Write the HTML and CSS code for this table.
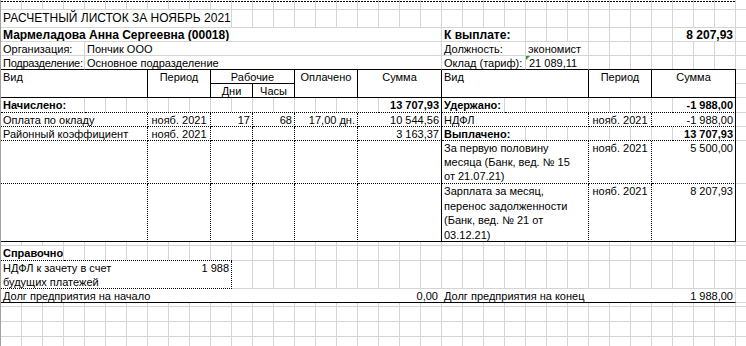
FILE: index.html
```html
<!DOCTYPE html>
<html lang="ru">
<head>
<meta charset="utf-8">
<title>Расчетный листок</title>
<link rel="stylesheet" href="styles.css">
</head>
<body>
<div class="sheet">
  <div class="row h10">
    <div class="pb s35"></div>
  </div>
  <div class="row h18">
    <div class="c s11 title">РАСЧЕТНЫЙ ЛИСТОК ЗА НОЯБРЬ 2021</div>
  </div>
  <div class="row h14">
    <div class="c s21 name">Мармеладова Анна Сергеевна (00018)</div>
    <div class="c s4 big">К выплате:</div>
    <div class="gap s7"></div>
    <div class="c s3 big r">8 207,93</div>
  </div>
  <div class="row h14">
    <div class="c s4">Организация:</div>
    <div class="c s17">Пончик ООО</div>
    <div class="c s4">Должность:</div>
    <div class="c s3">экономист</div>
  </div>
  <div class="row h14">
    <div class="c s4 bb tight">Подразделение:</div>
    <div class="c s17 bb">Основное подразделение</div>
    <div class="c s4 bb">Оклад (тариф):</div>
    <div class="c s3 bb flag">21 089,11</div>
    <div class="sp s7 bb"></div>
  </div>

  <div class="row h28">
    <div class="c s7 bk">Вид</div>
    <div class="c s3 bk ctr">Период</div>
    <div class="c s4 bk grp">
      <div class="gt">Рабочие</div>
      <div class="gb"><div class="gd">Дни</div><div class="gh">Часы</div></div>
    </div>
    <div class="c s3 bk ctr">Оплачено</div>
    <div class="c s4 bk ctr">Сумма</div>
    <div class="c s7 bk">Вид</div>
    <div class="c s3 bk ctr">Период</div>
    <div class="c s4 bk ctr">Сумма</div>
    <div class="fill"></div>
  </div>

  <div class="row h15">
    <div class="c s4 b bd">Начислено:</div>
    <div class="sp s14 bd"></div>
    <div class="c s3 b bd brk r">13 707,93</div>
    <div class="c s3 b bd">Удержано:</div>
    <div class="sp s8 bd"></div>
    <div class="c s3 b bd brk r">-1 988,00</div>
  </div>

  <div class="row h14">
    <div class="c s7 bd bdr">Оплата по окладу</div>
    <div class="c s3 bd bdr ctr">нояб. 2021</div>
    <div class="c s2 bd bdr r">17</div>
    <div class="c s2 bd bdr r">68</div>
    <div class="c s3 bd bdr r">17,00 дн.</div>
    <div class="c s4 bd brk r">10 544,56</div>
    <div class="c s7 bd bdr">НДФЛ</div>
    <div class="c s3 bd bdr ctr">нояб. 2021</div>
    <div class="c s4 bd brk r">-1 988,00</div>
  </div>

  <div class="row h14">
    <div class="c s7 bd bdr">Районный коэффициент</div>
    <div class="c s3 bd bdr ctr">нояб. 2021</div>
    <div class="c s2 bd bdr"></div>
    <div class="c s2 bd bdr"></div>
    <div class="c s3 bd bdr"></div>
    <div class="c s4 bd brk r">3 163,37</div>
    <div class="c s4 b bd">Выплачено:</div>
    <div class="sp s7 bd"></div>
    <div class="c s3 b bd brk r">13 707,93</div>
  </div>

  <div class="row h43">
    <div class="c s7 bd bdr"></div>
    <div class="c s3 bd bdr"></div>
    <div class="c s2 bd bdr"></div>
    <div class="c s2 bd bdr"></div>
    <div class="c s3 bd bdr"></div>
    <div class="c s4 bd brk"></div>
    <div class="c s7 bd bdr">За первую половину<br>месяца (Банк, вед. № 15<br>от 21.07.21)</div>
    <div class="c s3 bd bdr ctr">нояб. 2021</div>
    <div class="c s4 bd brk r">5 500,00</div>
  </div>

  <div class="row h58">
    <div class="c s7 bb bdr"></div>
    <div class="c s3 bb bdr"></div>
    <div class="c s2 bb bdr"></div>
    <div class="c s2 bb bdr"></div>
    <div class="c s3 bb bdr"></div>
    <div class="c s4 bb brk"></div>
    <div class="c s7 bb bdr tall">Зарплата за месяц,<br>перенос задолженности<br>(Банк, вед. № 21 от<br>03.12.21)</div>
    <div class="c s3 bb bdr ctr">нояб. 2021</div>
    <div class="c s4 bb brk r">8 207,93</div>
  </div>

  <div class="row h4"></div>

  <div class="row h15">
    <div class="c s3 b bd">Справочно</div>
    <div class="sp s8 bd"></div>
  </div>

  <div class="row h28">
    <div class="c s11 bd bdr box">
      <div class="bt">НДФЛ к зачету в счет<br>будущих платежей</div>
      <div class="bv">1 988</div>
    </div>
  </div>

  <div class="row h14">
    <div class="c s35 bb debt">
      <div class="dl"><span>Долг предприятия на начало</span><span>0,00</span></div>
      <div class="dr"><span>Долг предприятия на конец</span><span>1 988,00</span></div>
    </div>
  </div>

  <div class="row h4"></div>
  <div class="row h15"></div>
  <div class="row h15"></div>
  <div class="row h15"></div>
</div>
</body>
</html>
```

FILE: styles.css
```css
html, body {
  margin: 0;
  padding: 0;
  background: #fff;
}

body {
  width: 746px;
  height: 346px;
  overflow: hidden;
  font-family: "Liberation Sans", Arial, sans-serif;
  font-size: 11px;
  color: #000;
}

.sheet {
  width: 756px;
  border-left: 1px solid #a0a0a0;
  background-image: repeating-linear-gradient(to right, transparent 0 20px, #d4d4d4 20px 21px);
}

.row {
  display: grid;
  grid-template-columns: repeat(36, 21px);
  box-sizing: border-box;
  background: linear-gradient(#d4d4d4, #d4d4d4) 0 100% / 100% 1px no-repeat;
}

.h4 { height: 4px; }
.h10 { height: 10px; }
.h14 { height: 14px; }
.h15 { height: 15px; }
.h18 { height: 18px; }
.h28 { height: 28px; }
.h43 { height: 43px; }
.h58 { height: 58px; }

.s2 { grid-column: span 2; }
.s3 { grid-column: span 3; }
.s4 { grid-column: span 4; }
.s7 { grid-column: span 7; }
.s8 { grid-column: span 8; }
.s10 { grid-column: span 10; }
.s11 { grid-column: span 11; }
.s14 { grid-column: span 14; }
.s17 { grid-column: span 17; }
.s21 { grid-column: span 21; }
.s35 { grid-column: span 35; }

.c {
  box-sizing: border-box;
  min-width: 0;
  background: #fff;
  border-right: 1px solid #d4d4d4;
  border-bottom: 1px solid #d4d4d4;
  padding: 0 2px;
  line-height: 14px;
  white-space: nowrap;
  overflow: hidden;
}

.sp {
  box-sizing: border-box;
  background: linear-gradient(#fff, #fff) 0 100% / 100% 1px no-repeat border-box;
}

.pb {
  align-self: start;
  margin-top: 1px;
  height: 1px;
  background: repeating-linear-gradient(to right, #000 0 2px, transparent 2px 3px);
}

.title {
  font-size: 12px;
  padding-top: 1px;
}

.name,
.big {
  font-size: 12px;
  font-weight: bold;
}

.tight {
  letter-spacing: -0.25px;
  padding-right: 0;
}

.flag {
  position: relative;
  padding-left: 3px;
}

.flag::before {
  content: "";
  position: absolute;
  left: 0;
  top: 0;
  border-top: 4px solid #2f8f3c;
  border-right: 4px solid transparent;
}

.b { font-weight: bold; }
.r { text-align: right; }
.ctr { text-align: center; }

.bb { border-bottom: 1px solid #000; }
.bd { border-bottom: 1px dotted #000; }
.bdr { border-right: 1px dotted #000; }
.brk { border-right: 1px solid #000; }
.bk {
  border-right: 1px solid #000;
  border-bottom: 1px solid #000;
}

.grp {
  display: flex;
  flex-direction: column;
  padding: 0;
}

.gt {
  box-sizing: border-box;
  height: 14px;
  border-bottom: 1px solid #000;
  text-align: center;
}

.gb {
  flex: 1;
  display: flex;
}

.gd {
  box-sizing: border-box;
  width: 42px;
  border-right: 1px solid #000;
  text-align: center;
}

.gh {
  flex: 1;
  text-align: center;
}

.fill {
  grid-column: 36;
  align-self: start;
  box-sizing: border-box;
  height: 14px;
  border-bottom: 1px solid #d4d4d4;
}

.tall {
  line-height: 14.5px;
}

.box {
  display: flex;
}

.bt {
  flex: none;
  width: 144px;
}

.bv {
  flex: 1;
  text-align: right;
}

.debt {
  display: flex;
  padding: 0;
}

.dl {
  box-sizing: border-box;
  flex: none;
  width: 441px;
  padding: 0 4px 0 2px;
  display: flex;
  justify-content: space-between;
}

.dr {
  flex: 1;
  padding: 0 2px;
  display: flex;
  justify-content: space-between;
}
```
